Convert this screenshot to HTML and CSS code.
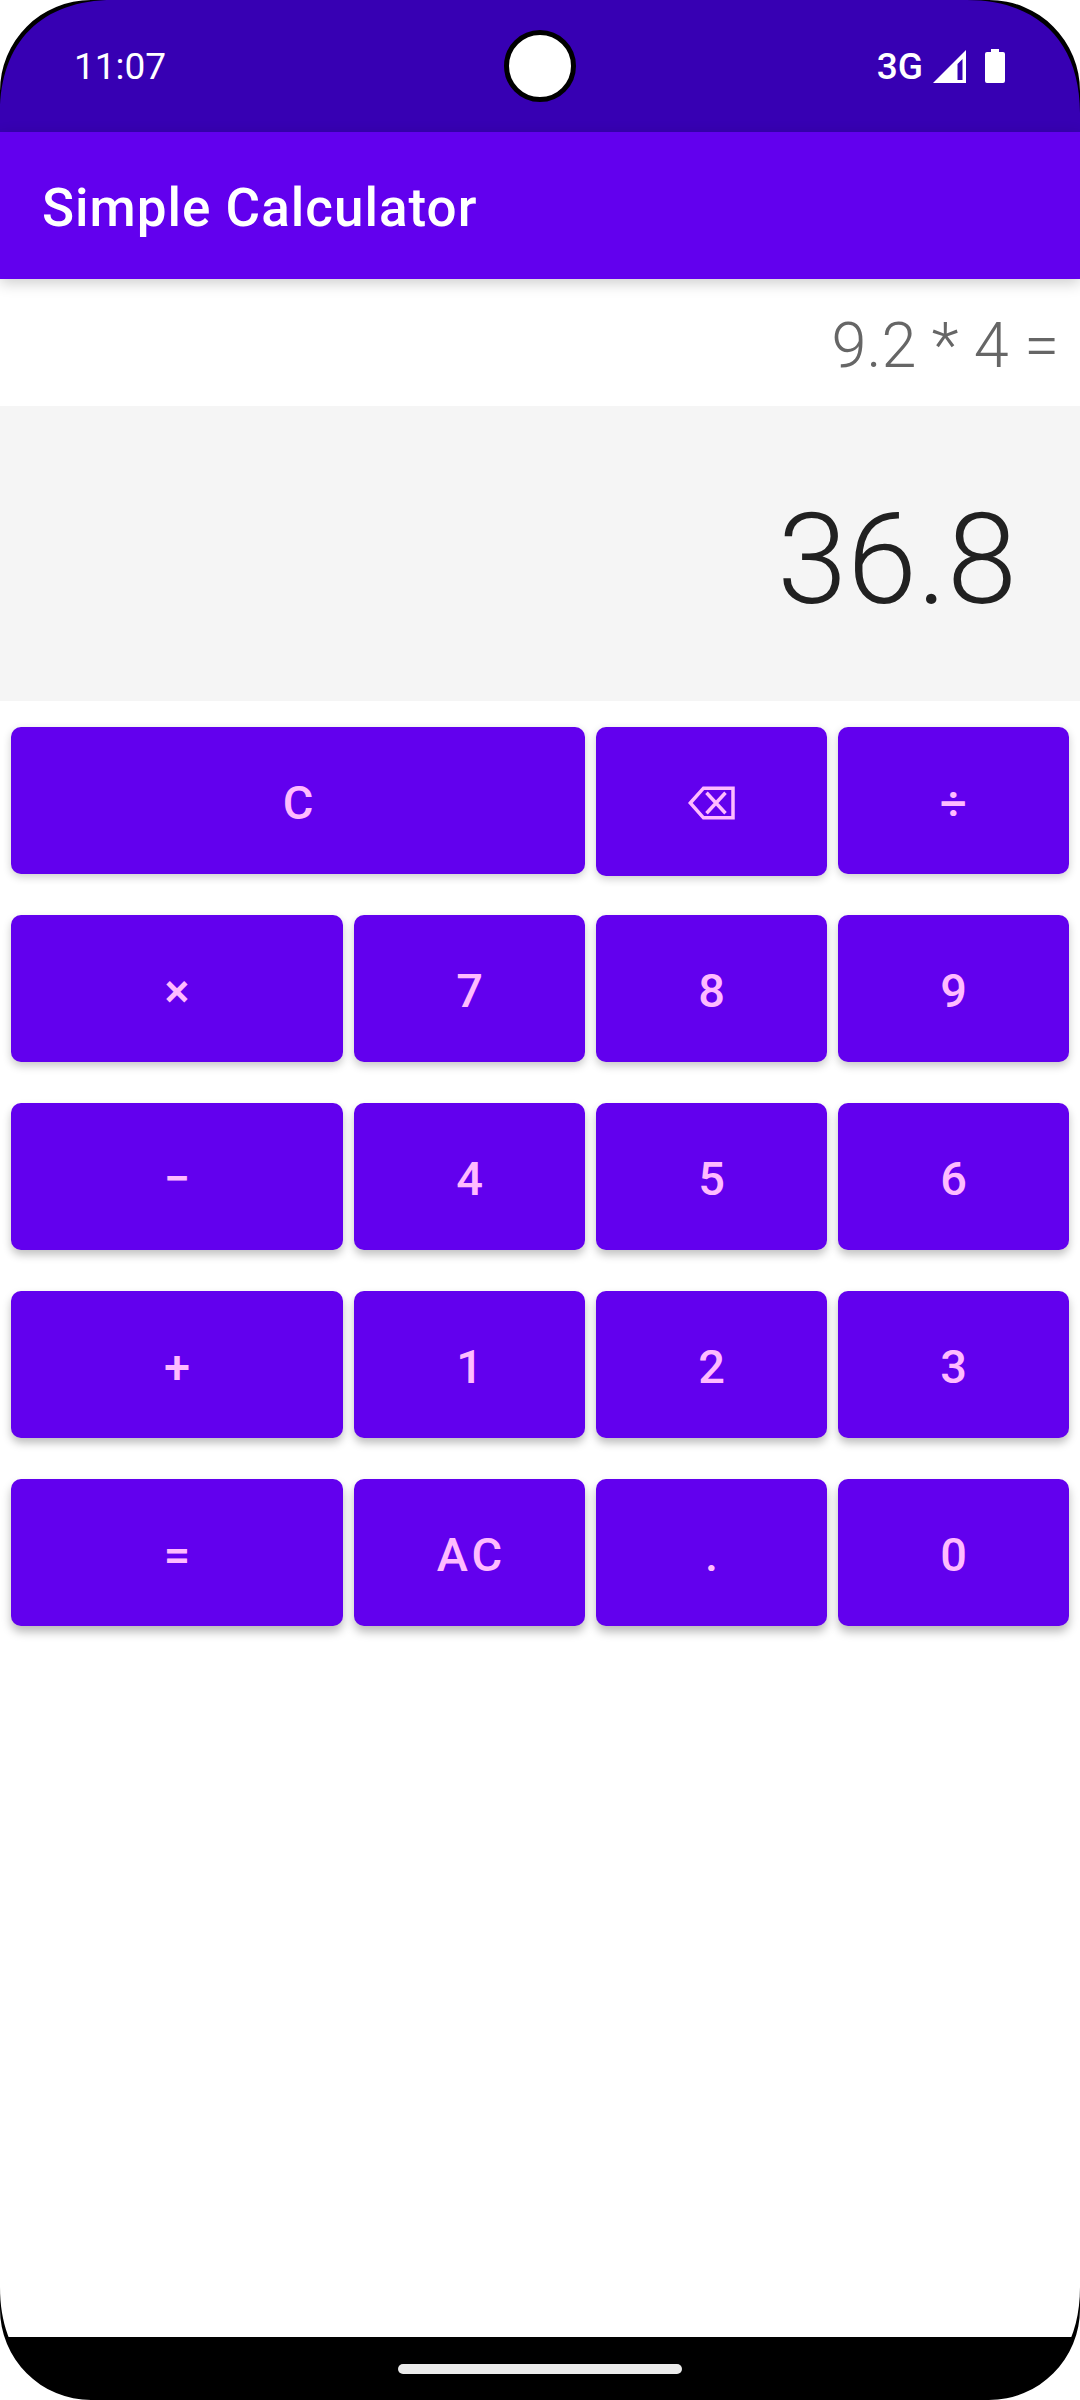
FILE: index.html
```html
<!DOCTYPE html>
<html lang="en">
<head>
<meta charset="utf-8">
<meta name="viewport" content="width=device-width, initial-scale=1">
<title>Simple Calculator</title>
<link rel="stylesheet" href="styles.css">
</head>
<body>
<div class="screen">
  <div class="status-bar">
    <span class="clock">11:07</span>
    <span class="camera"></span>
    <div class="status-icons">
      <span class="network">3G</span>
      <svg class="signal" viewBox="0 0 33 33" aria-hidden="true"><path fill="#fff" fill-rule="evenodd" d="M33 0V33H0ZM29.500 9L24.500 14V30H29.500Z"/></svg>
      <svg class="battery" viewBox="0 0 20 34" aria-hidden="true"><path fill="#fff" d="M6 0H14V3H18Q20 3 20 5V32Q20 34 18 34H2Q0 34 0 32V5Q0 3 2 3H6Z"/></svg>
    </div>
  </div>
  <header class="app-bar"><h1 class="title">Simple Calculator</h1></header>
  <main class="calculator">
    <div class="expression">9.2 * 4 =</div>
    <output class="result">36.8</output>
    <div class="keypad">
      <button class="key row-1 key-clear" type="button">C</button>
      <button class="key row-1 key-backspace" type="button" aria-label="Backspace">
        <svg class="backspace-icon" viewBox="0 0 48 34" aria-hidden="true"><path fill="none" stroke="#ffbbff" stroke-width="3.500" d="M2.300 17L15.500 2.200H45V31.800H15.500ZM18.500 6.800L37.500 27.200M37.500 6.800L18.500 27.200"/></svg>
      </button>
      <button class="key row-1" type="button">÷</button>
      <button class="key row-2" type="button">×</button>
      <button class="key row-2" type="button">7</button>
      <button class="key row-2" type="button">8</button>
      <button class="key row-2" type="button">9</button>
      <button class="key row-3" type="button">−</button>
      <button class="key row-3" type="button">4</button>
      <button class="key row-3" type="button">5</button>
      <button class="key row-3" type="button">6</button>
      <button class="key row-4" type="button">+</button>
      <button class="key row-4" type="button">1</button>
      <button class="key row-4" type="button">2</button>
      <button class="key row-4" type="button">3</button>
      <button class="key row-5" type="button">=</button>
      <button class="key row-5" type="button">AC</button>
      <button class="key row-5" type="button">.</button>
      <button class="key row-5" type="button">0</button>
    </div>
  </main>
  <div class="nav-bar"><span class="nav-handle"></span></div>
  <svg class="corner corner-tl" viewBox="0 0 120 120" aria-hidden="true"><path d="M0 0H113C42 0 0 42 0 113Z"/><path fill="#fff" d="M0 0H91A91 91 0 0 0 0 91Z"/></svg>
  <svg class="corner corner-tr" viewBox="0 0 120 120" aria-hidden="true"><path d="M0 0H113C42 0 0 42 0 113Z"/><path fill="#fff" d="M0 0H91A91 91 0 0 0 0 91Z"/></svg>
  <svg class="corner corner-bl" viewBox="0 0 120 120" aria-hidden="true"><path d="M0 0H113C42 0 0 42 0 113Z"/><path fill="#fff" d="M0 0H91A91 91 0 0 0 0 91Z"/></svg>
  <svg class="corner corner-br" viewBox="0 0 120 120" aria-hidden="true"><path d="M0 0H113C42 0 0 42 0 113Z"/><path fill="#fff" d="M0 0H91A91 91 0 0 0 0 91Z"/></svg>
</div>
</body>
</html>
```
FILE: styles.css
```css
* { box-sizing: border-box; }

body {
  margin: 0;
  background: #fff;
  font-family: Roboto, "Liberation Sans", sans-serif;
}

.screen {
  position: relative;
  display: flex;
  flex-direction: column;
  min-height: 100vh;
}

/* System status bar */
.status-bar {
  display: grid;
  grid-template-columns: 1fr auto 1fr;
  align-items: center;
  height: 132px;
  padding: 0 75px 0 74px;
  background: #3700b3;
  color: #fff;
  font-size: 37px;
}

.camera {
  width: 72px;
  height: 72px;
  border: 5px solid #000;
  border-radius: 50%;
  background: #fff;
}

.status-icons {
  display: flex;
  align-items: center;
  justify-content: flex-end;
}

.network { margin-right: 10px; font-weight: 500; }
.signal { width: 33px; height: 33px; margin-right: 19px; }
.battery { width: 20px; height: 34px; }

/* App bar */
.app-bar {
  position: relative;
  display: flex;
  align-items: center;
  height: 147px;
  padding: 5px 42px 0;
  background: #6200ee;
  color: #fff;
  box-shadow: 0 4px 14px rgba(0, 0, 0, 0.2);
}

.title {
  margin: 0;
  font-size: 53px;
  font-weight: 500;
  letter-spacing: 1px;
}

/* Display */
.calculator { flex: 1; }

.expression {
  padding: 29px 21px 23px;
  font-size: 63px;
  font-weight: 300;
  line-height: 75px;
  text-align: right;
  color: #666;
}

.result {
  display: block;
  padding: 80px 63px 66px;
  font-size: 126px;
  font-weight: 300;
  line-height: 149px;
  text-align: right;
  color: #212121;
  background: #f5f5f5;
}

/* Keypad */
.keypad {
  display: grid;
  grid-template-columns: 332fr 231fr 231fr 231fr;
  grid-auto-rows: 147px;
  gap: 41px 11px;
  padding: 26px 11px;
}

.key {
  border: 0;
  border-radius: 10px;
  padding: 3px 0 0 4px;
  background: #6200ee;
  color: #ffbbff;
  font: 500 47px Roboto, "Liberation Sans", sans-serif;
  letter-spacing: 4px;
}

.key-clear { grid-column: span 2; }

.key-backspace {
  display: flex;
  align-items: center;
  justify-content: center;
  height: 149px;
  padding-left: 0;
}

.backspace-icon { width: 48px; height: 34px; }

/* Shadows deepen towards the bottom of the screen */
.row-1 { box-shadow: 0 3px 9px rgba(0, 0, 0, 0.2); }
.row-2 { box-shadow: 0 4px 9px rgba(0, 0, 0, 0.22); }
.row-3 { box-shadow: 0 5px 9px rgba(0, 0, 0, 0.24); }
.row-4 { box-shadow: 0 5px 9px rgba(0, 0, 0, 0.26); }
.row-5 { box-shadow: 0 6px 10px rgba(0, 0, 0, 0.27); }

/* Gesture navigation */
.nav-bar {
  display: flex;
  align-items: center;
  justify-content: center;
  height: 63px;
  background: #000;
}

.nav-handle {
  width: 284px;
  height: 10px;
  border-radius: 5px;
  background: #ebebeb;
}

/* Rounded display corners */
.corner { position: absolute; width: 120px; height: 120px; }
.corner-tl { top: 0; left: 0; }
.corner-tr { top: 0; right: 0; transform: rotate(90deg); }
.corner-br { right: 0; bottom: 0; transform: rotate(180deg); }
.corner-bl { bottom: 0; left: 0; transform: rotate(270deg); }
```
